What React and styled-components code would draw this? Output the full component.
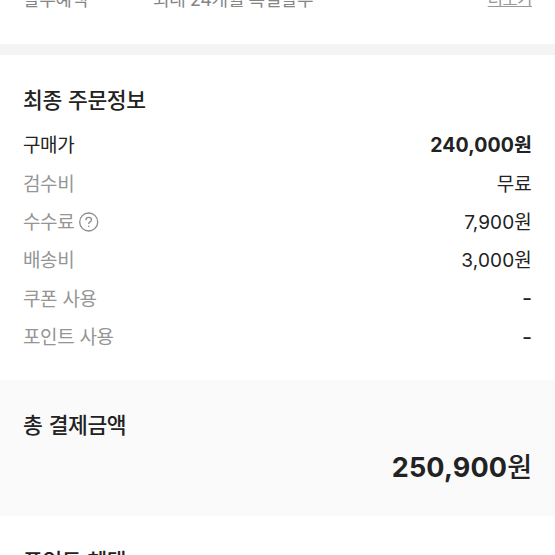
import React from 'react';
import styled, { createGlobalStyle } from 'styled-components';

const Global = createGlobalStyle`
  * { box-sizing: border-box; }
  body { margin: 0; overflow: hidden; background: #fff; color: #222; font-family: Inter, "Noto Sans CJK KR", sans-serif; }
`;
const Page = styled.main`width: 555px; height: 555px; overflow: hidden; display: flex; flex-direction: column;`;
const Benefits = styled.section`height: 44px; flex: none; display: flex; padding: 0 23px; color: #858585; font-size: 18px; line-height: 28px; letter-spacing: -0.4px; overflow: hidden;`;
const BenefitText = styled.span`height: 28px; margin-top: -14px; width: ${p => p.$width || 'auto'};`;
const More = styled(BenefitText)`margin-top: -15px; margin-left: auto; font-size: 16.5px; color: #999; text-decoration: underline; text-decoration-thickness: 1px;`;
const Divider = styled.div`height: 11px; flex: none; background: #f4f4f4;`;
const Order = styled.section`height: 325px; flex: none; padding: 30px 23px 0;`;
const Title = styled.h2`margin: 0; height: 30px; line-height: 30px; font-size: 21.5px; font-weight: 500; letter-spacing: -0.4px; word-spacing: 1px; white-space: nowrap;`;
const Rows = styled.dl`margin: 9.6px 0 0;`;
const Row = styled.div`height: 38.4px; display: flex; justify-content: space-between; align-items: center; font-size: 19px; letter-spacing: -0.4px; word-spacing: 0.3px;`;
const Label = styled.dt`display: flex; align-items: center; gap: 5px; white-space: nowrap; color: ${p => p.$strong ? '#222' : '#959595'};`;
const Value = styled.dd`margin: 0; font-size: ${p => p.$strong ? '19.5px' : '19px'}; font-weight: ${p => p.$strong ? 700 : 400}; letter-spacing: ${p => p.$strong ? '0.1px' : '0.15px'};`;
const Won = styled.span`font-weight: 500; letter-spacing: 0;`;
const Dash = styled.span`display: block; width: 8px; height: 38px; line-height: 41px; font-size: 22px; margin-right: 2px;`;
const Total = styled.section`height: 136px; flex: none; padding: 30px 23px 0; background: #fafafa;`;
const Amount = styled.div`text-align: right; font-size: 27px; font-weight: 650; line-height: 40px; margin-top: 8px; letter-spacing: 0.15px;`;
const Points = styled.section`padding: 30px 23px;`;
const HelpIcon = styled.svg`display: block; flex: none; margin-top: 3px;`;

const rows = [
  ['구매가', '240,000원'],
  ['검수비', '무료'],
  ['수수료', '7,900원'],
  ['배송비', '3,000원'],
  ['쿠폰 사용', '-'],
  ['포인트 사용', '-'],
];

const Help = () => (
  <HelpIcon width="20" height="20" viewBox="0 0 20 20" fill="none" stroke="#8c8c8c" strokeWidth="1.3">
    <circle cx="9.7" cy="10" r="9" />
    <path d="M6.9 8.2C6.9 6.3 8 5.4 9.7 5.4c1.7 0 2.8.9 2.8 2.3 0 1.1-.6 1.6-1.5 2.2-.9.6-1.3 1.1-1.3 2.2" />
    <circle cx="9.7" cy="14.2" r=".8" fill="#8c8c8c" stroke="none" />
  </HelpIcon>
);

export default function App() {
  return (
    <>
      <Global />
      <Page>
        <Benefits>
          <BenefitText $width="130px">할부혜택</BenefitText>
          <BenefitText>최대 24개월 특별할부</BenefitText>
          <More>더보기</More>
        </Benefits>
        <Divider />
        <Order>
          <Title>최종 주문정보</Title>
          <Rows>
            {rows.map(([label, value], i) => (
              <Row key={label}>
                <Label $strong={i === 0}>{label}{i === 2 && <Help />}</Label>
                <Value $strong={i === 0}>{value === '-' ? <Dash>-</Dash> : value}</Value>
              </Row>
            ))}
          </Rows>
        </Order>
        <Total>
          <Title>총 결제금액</Title>
          <Amount>250,900<Won>원</Won></Amount>
        </Total>
        <Points><Title>포인트 혜택</Title></Points>
      </Page>
    </>
  );
}
